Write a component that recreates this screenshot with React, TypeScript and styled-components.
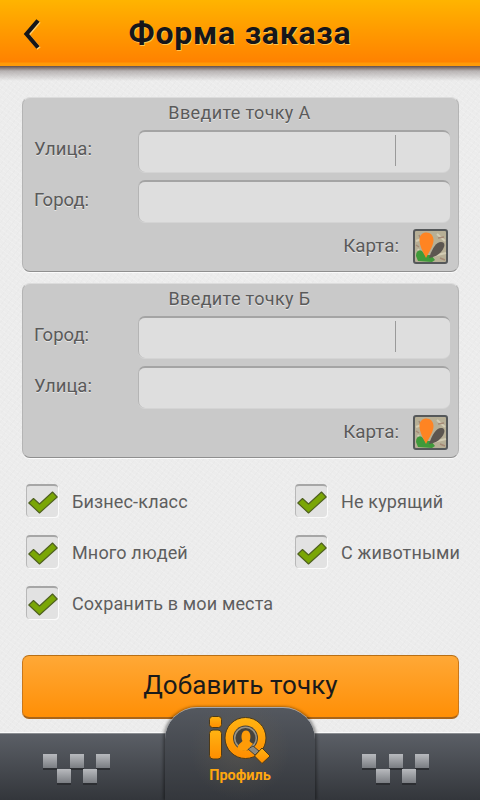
import React from 'react';
import styled, { createGlobalStyle } from 'styled-components';

const Global = createGlobalStyle`
  html, body {
    margin: 0;
    padding: 0;
  }
  body {
    font-family: Roboto, "Noto Sans", sans-serif;
    background: #ededed;
  }
`;

const Page = styled.div`
  width: 480px;
  height: 800px;
  overflow: hidden;
  display: flex;
  flex-direction: column;
  background-color: #ececec;
  background-image:
    repeating-linear-gradient(37deg, rgba(255, 255, 255, 0.16) 0 1px, transparent 1px 4px),
    repeating-linear-gradient(-53deg, rgba(0, 0, 0, 0.012) 0 1px, transparent 1px 5px);
`;

const Header = styled.header`
  height: 66px;
  flex: none;
  box-sizing: border-box;
  display: flex;
  align-items: center;
  justify-content: center;
  position: relative;
  background: linear-gradient(#ffb400 0, #ff9b00 30px, #ff8200 62px, #ff9a08 63px, #ff9a08 66px);

  &::after {
    content: '';
    position: absolute;
    left: 0;
    right: 0;
    top: 66px;
    height: 15px;
    background: linear-gradient(rgba(85, 62, 55, 0.9), rgba(120, 110, 110, 0.45) 5px, rgba(150, 150, 150, 0));
  }
`;

const Back = styled.button`
  position: absolute;
  left: 22px;
  top: 18px;
  width: 20px;
  height: 32px;
  padding: 0;
  border: 0;
  background: none;
  display: flex;
`;

const Title = styled.h1`
  margin: 0 0 1px;
  font-size: 32px;
  line-height: 38px;
  font-weight: 700;
  letter-spacing: 0.75px;
  color: #16161a;
  text-shadow: 1px 1px 0 rgba(255, 215, 110, 0.75);
`;

const Content = styled.main`
  flex: 1;
  display: flex;
  flex-direction: column;
  padding: 31px 21px 0 22px;
`;

const Panel = styled.section`
  height: 175px;
  box-sizing: border-box;
  margin-bottom: 11px;
  padding: 0 8px 0 11px;
  border-radius: 8px;
  background: #c9c9c9;
  border: 1px solid #b4b4b4;
  border-top-color: #dcdcdc;
  border-bottom: 1px solid #8f8f8f;
  box-shadow: 0 1px 0 #fbfbfb;
  display: flex;
  flex-direction: column;
`;

const PanelTitle = styled.div`
  height: 32px;
  box-sizing: border-box;
  margin-right: 5px;
  font-size: 18px;
  line-height: 29px;
  text-align: center;
  letter-spacing: 0.35px;
  color: #5a5a5a;
  text-shadow: 0 1px 0 #e6e6e6;
`;

const Field = styled.div`
  height: 42px;
  margin-bottom: 8px;
  display: flex;
  align-items: center;

  & + & label {
    margin-top: -2px;
  }
`;

const FieldLabel = styled.label`
  width: 104px;
  flex: none;
  font-size: 18.5px;
  margin-top: -4px;
  color: #5a5a5a;
  text-shadow: 0 1px 0 #e6e6e6;
`;

const Input = styled.div<{ $caret?: boolean }>`
  flex: 1;
  height: 42px;
  box-sizing: border-box;
  position: relative;
  border-radius: 7px;
  background: #dedede;
  border-top: 2px solid #a4a4a4;
  border-left: 1px solid #b4b4b4;
  box-shadow: 0 1px 0 #d4d4d4;

  &::after {
    content: '';
    display: ${(p) => (p.$caret ? 'block' : 'none')};
    position: absolute;
    top: 3px;
    right: 54px;
    width: 1px;
    height: 31px;
    background: #9a9a9a;
  }
`;

const MapRow = styled.div`
  display: flex;
  align-items: center;
  justify-content: flex-end;
  gap: 14px;
  margin-top: -1px;
`;

const MapLabel = styled.span`
  font-size: 18.8px;
  margin-top: -2px;
  color: #5a5a5a;
  text-shadow: 0 1px 0 #e6e6e6;
`;

const MapButton = styled.div`
  width: 35px;
  height: 35px;
  flex: none;
  margin-right: 2px;
`;

const Options = styled.div`
  display: grid;
  grid-template-columns: 269px 1fr;
  grid-auto-rows: 51px;
  margin-top: 7px;
  margin-right: -8px;
  padding-left: 4px;
`;

const Option = styled.label<{ $wide?: boolean }>`
  display: flex;
  align-items: center;
  gap: 14px;
  grid-column: ${(p) => (p.$wide ? '1 / 3' : 'auto')};
  font-size: 18px;
  letter-spacing: 0.15px;
  color: #5e5e5e;
  white-space: nowrap;
`;

const Box = styled.span`
  width: 32px;
  height: 33px;
  flex: none;
  box-sizing: border-box;
  margin-top: -2px;
  border-radius: 4px;
  background: #e2e2e2;
  border-top: 2px solid #a6a6a6;
  border-left: 1px solid #b8b8b8;
  box-shadow: 1px 1px 0 #fafafa;
  position: relative;

  svg {
    position: absolute;
    left: 1px;
    top: 4px;
  }
`;

const AddButton = styled.button`
  height: 64px;
  margin-top: 26px;
  flex: none;
  box-sizing: border-box;
  border: 1px solid #c9771a;
  border-top-color: #b86f14;
  border-bottom: 2px solid #a9651a;
  border-radius: 7px;
  background: linear-gradient(#ffa836, #ff8f06);
  font-family: inherit;
  font-size: 26px;
  letter-spacing: 0.1px;
  padding: 0 0 4px;
  color: #1a1a1a;
`;

const Nav = styled.nav`
  height: 67px;
  flex: none;
  box-sizing: border-box;
  display: flex;
  align-items: flex-end;
  border-top: 1px solid #8b8e92;
  box-shadow: 0 -1px 0 #fafafa;
  background: linear-gradient(#5b5f66, #33363b);
`;

const NavSide = styled.div<{ $inset: number }>`
  width: 165px;
  flex: none;
  height: 66px;
  display: flex;
  justify-content: center;
  align-items: flex-start;
  padding-top: 20px;
  padding-right: ${(p) => p.$inset}px;
  box-sizing: border-box;
`;

const CenterTab = styled.div`
  width: 150px;
  height: 93px;
  flex: none;
  margin-top: -27px;
  padding-top: 8px;
  position: relative;
  box-sizing: border-box;
  border-radius: 32px 32px 0 0;
  border-top: 1px solid #a4a8ae;
  background:
    radial-gradient(circle at 50% 45%, rgba(110, 100, 80, 0.35), transparent 55%),
    linear-gradient(#54585f, #34373c);
  box-shadow: -2px 0 3px rgba(0, 0, 0, 0.35), 2px 0 3px rgba(0, 0, 0, 0.35);
  display: flex;
  flex-direction: column;
  align-items: center;
`;

const TabLabel = styled.span`
  margin-top: 3px;
  font-size: 14.5px;
  line-height: 17px;
  font-weight: 700;
  color: #ffa70f;
`;

const BackIcon = () => (
  <svg width="20" height="32" viewBox="0 0 20 32">
    <path d="M16 2.500 L4.500 16 L16 29.500" fill="none" stroke="#ffcf70" strokeWidth="4.200" transform="translate(1 1)" />
    <path d="M16 2.500 L4.500 16 L16 29.500" fill="none" stroke="#16161a" strokeWidth="4.200" />
  </svg>
);

const MapIcon = () => (
  <svg width="35" height="35" viewBox="0 0 35 35">
    <rect x="1" y="1" width="33" height="33" rx="2" fill="#b7af96" stroke="#55585a" strokeWidth="2" />
    <path d="M3 12 L14 8 M20 27 L33 24 M5 20 L9 27 M24 5 L32 12" stroke="#d3ccb4" strokeWidth="2" fill="none" />
    <path d="M25 9 L31 8 M6 6 L8 10 M27 29 L32 31 M3 16 L6 18" stroke="#a58a76" strokeWidth="1.500" fill="none" />
    <path d="M3 27 C3 22 6 20 9 22 L12 26 L18 26 L22 31 L19 33 L5 32 Z" fill="#3f9a3a" />
    <path d="M16 29 C19 20 23 13 28 13 C31 13 32 15 31 18 C29 24 23 28 16 29 Z" fill="#5c5650" />
    <path d="M13 29 C10 23 6.500 17 6.500 11 C6.500 6 9.500 3.500 13.500 3.500 C17.500 3.500 20.500 6.500 20.500 11 C20.500 17 16 23 13 29 Z" fill="#ff8422" />
  </svg>
);

const CheckIcon = () => (
  <svg width="30" height="24" viewBox="0 0 30 24">
    <path d="M0.800 13 L5.500 8.500 L11.500 14 L24.500 2 L29.200 7 L11.500 23 Z" fill="#7aa606" stroke="#4f6020" strokeWidth="1.100" strokeLinejoin="round" />
  </svg>
);

const TaxiIcon = () => (
  <svg width="68" height="31" viewBox="0 0 68 31">
    <defs>
      <linearGradient id="taxiCell" x1="0" y1="0" x2="0" y2="1">
        <stop offset="0" stopColor="#b8babe" />
        <stop offset="1" stopColor="#7a7d82" />
      </linearGradient>
    </defs>
    {[
      [0, 0],
      [27, 0],
      [53, 0],
      [14, 15],
      [40, 15],
    ].map(([x, y]) => (
      <g key={`${x}-${y}`}>
        <rect x={x} y={y + 1} width="14" height="15" fill="#2c2e32" />
        <rect x={x} y={y} width="14" height="14" fill="url(#taxiCell)" />
      </g>
    ))}
  </svg>
);

const LogoIcon = () => (
  <svg width="62" height="48" viewBox="0 0 62 48">
    <defs>
      <linearGradient id="logoFill" x1="0" y1="0" x2="0" y2="1">
        <stop offset="0" stopColor="#ffb412" />
        <stop offset="1" stopColor="#ff8d00" />
      </linearGradient>
    </defs>
    <rect x="0.500" y="0.500" width="12" height="11" rx="3" fill="url(#logoFill)" stroke="#4d3a18" />
    <rect x="0.500" y="14" width="12" height="29" rx="3.500" fill="url(#logoFill)" stroke="#4d3a18" />
    <circle cx="36.500" cy="22" r="20.500" fill="url(#logoFill)" stroke="#4d3a18" />
    <circle cx="36.500" cy="22" r="12.500" fill="#45423c" />
    <circle cx="36.500" cy="22" r="10.800" fill="none" stroke="#9a9484" strokeWidth="1.500" />
    <path d="M44 30 L50 35 L46 39 L39 33 Z" fill="#8d8a80" stroke="#45423c" />
    <path d="M29 34 C28 28 32 27 33.500 25 C31.500 21 32.500 14.500 37 14.500 C41.500 14.500 42.500 21 40.500 25 C41.500 26.500 43 27 44 28 L37 35 Z" fill="#ff9c08" />
    <path d="M53 32 L61 40 L53 47.500 L45.500 40 Z" fill="url(#logoFill)" stroke="#4d3a18" />
  </svg>
);

type Stop = { title: string; first: string; second: string };

const stops: Stop[] = [
  { title: 'Введите точку А', first: 'Улица:', second: 'Город:' },
  { title: 'Введите точку Б', first: 'Город:', second: 'Улица:' },
];

const options = [
  { text: 'Бизнес-класс' },
  { text: 'Не курящий' },
  { text: 'Много людей' },
  { text: 'С животными' },
  { text: 'Сохранить в мои места', wide: true },
];

function App() {
  return (
    <Page>
      <Global />
      <Header>
        <Back aria-label="Назад">
          <BackIcon />
        </Back>
        <Title>Форма заказа</Title>
      </Header>
      <Content>
        {stops.map((stop) => (
          <Panel key={stop.title}>
            <PanelTitle>{stop.title}</PanelTitle>
            <Field>
              <FieldLabel>{stop.first}</FieldLabel>
              <Input $caret />
            </Field>
            <Field>
              <FieldLabel>{stop.second}</FieldLabel>
              <Input />
            </Field>
            <MapRow>
              <MapLabel>Карта:</MapLabel>
              <MapButton>
                <MapIcon />
              </MapButton>
            </MapRow>
          </Panel>
        ))}
        <Options>
          {options.map((option) => (
            <Option key={option.text} $wide={option.wide}>
              <Box>
                <CheckIcon />
              </Box>
              {option.text}
            </Option>
          ))}
        </Options>
        <AddButton>Добавить точку</AddButton>
      </Content>
      <Nav>
        <NavSide $inset={12}>
          <TaxiIcon />
        </NavSide>
        <CenterTab>
          <LogoIcon />
          <TabLabel>Профиль</TabLabel>
        </CenterTab>
        <NavSide $inset={4}>
          <TaxiIcon />
        </NavSide>
      </Nav>
    </Page>
  );
}

export default App;
